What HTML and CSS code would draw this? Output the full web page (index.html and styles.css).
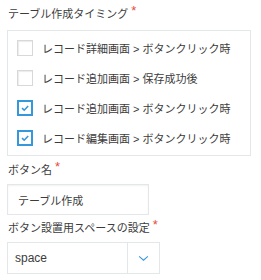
FILE: index.html
```
<!DOCTYPE html>
<html lang="ja">
<head>
    <meta charset="UTF-8">
    <title>プラグイン設定</title>
    <link rel="stylesheet" href="styles.css">
</head>
<body>
    <div class="settings">
        <div class="label">テーブル作成タイミング<span class="required">*</span></div>
        <div class="checkbox-group">
            <label class="checkbox-item">
                <span class="checkbox"></span>
                <span class="checkbox-text">レコード詳細画面 &gt; ボタンクリック時</span>
            </label>
            <label class="checkbox-item">
                <span class="checkbox"></span>
                <span class="checkbox-text">レコード追加画面 &gt; 保存成功後</span>
            </label>
            <label class="checkbox-item">
                <span class="checkbox checked">
                    <svg viewBox="0 0 10 10" width="10" height="10"><path d="M2 5.2 L4.2 7.2 L8.2 3" fill="none" stroke="#3498db" stroke-width="1.6"/></svg>
                </span>
                <span class="checkbox-text">レコード追加画面 &gt; ボタンクリック時</span>
            </label>
            <label class="checkbox-item">
                <span class="checkbox checked">
                    <svg viewBox="0 0 10 10" width="10" height="10"><path d="M2 5.2 L4.2 7.2 L8.2 3" fill="none" stroke="#3498db" stroke-width="1.6"/></svg>
                </span>
                <span class="checkbox-text">レコード編集画面 &gt; ボタンクリック時</span>
            </label>
        </div>

        <div class="label label-field">ボタン名<span class="required">*</span></div>
        <input class="text-input" type="text" value="テーブル作成">

        <div class="label label-field2">ボタン設置用スペースの設定<span class="required">*</span></div>
        <div class="dropdown">
            <span class="dropdown-value">space</span>
            <span class="dropdown-toggle">
                <svg viewBox="0 0 12 8" width="11" height="7"><path d="M1 1.5 L6 6 L11 1.5" fill="none" stroke="#3498db" stroke-width="1.2"/></svg>
            </span>
        </div>
    </div>
</body>
</html>
```

FILE: styles.css
```
* {
    margin: 0;
    padding: 0;
    box-sizing: border-box;
}

body {
    font-family: "Liberation Sans", "Noto Sans CJK JP", sans-serif;
    font-size: 11px;
    color: #3c3c3c;
    background: #fff;
}

.settings {
    padding: 4px 0 0 7px;
}

.label {
    line-height: 20px;
    padding-left: 1px;
}

.required {
    color: #e74c3c;
    font-size: 13px;
    margin-left: 3px;
    vertical-align: top;
    line-height: 14px;
}

.checkbox-group {
    width: 244px;
    margin-top: 6px;
    border: 1px solid #e3e7e8;
    padding: 2px 0 2px 9px;
}

.checkbox-item {
    display: flex;
    align-items: center;
    height: 30px;
}

.checkbox {
    width: 16px;
    height: 16px;
    border: 1px solid #d8d8d8;
    box-shadow: 1px 1px 1px rgba(0,0,0,0.08) inset;
    display: flex;
    align-items: center;
    justify-content: center;
    margin-right: 9px;
}

.checkbox.checked {
    border: 2px solid #3498db;
    box-shadow: none;
}

.checkbox-text {
    font-size: 11px;
}

.label-field {
    margin-top: 4px;
}

.text-input {
    display: block;
    width: 142px;
    height: 31px;
    margin-top: 4px;
    border: 1px solid #e3e7e8;
    box-shadow: 0 1px 2px rgba(0,0,0,0.06) inset;
    padding: 0 10px;
    font-family: inherit;
    font-size: 11px;
    color: #3c3c3c;
    outline: none;
}

.label-field2 {
    margin-top: 3px;
}

.dropdown {
    display: flex;
    width: 153px;
    height: 32px;
    margin-top: 4px;
    border: 1px solid #e3e7e8;
}

.dropdown-value {
    flex: 1;
    line-height: 30px;
    padding-left: 7px;
    font-size: 12px;
}

.dropdown-toggle {
    width: 32px;
    border-left: 1px solid #e3e7e8;
    display: flex;
    align-items: center;
    justify-content: center;
}
```
